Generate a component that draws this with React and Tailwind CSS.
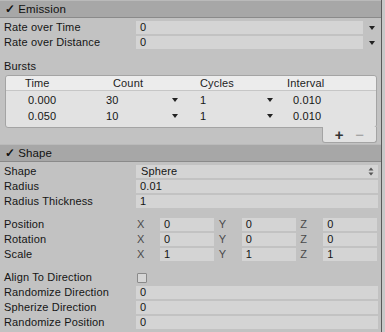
import React from "react";

const Arrow = () => (
  <svg width="6" height="4" viewBox="0 0 6 4" className="shrink-0">
    <path d="M0 0 L6 0 L3 4 Z" fill="#222" />
  </svg>
);

const UpDown = () => (
  <svg width="6" height="9" viewBox="0 0 6 9" className="shrink-0">
    <path d="M0.5 3.5 L5.5 3.5 L3 0.5 Z" fill="#555" />
    <path d="M0.5 5.5 L5.5 5.5 L3 8.5 Z" fill="#555" />
  </svg>
);

const Header = ({ title }) => (
  <div className="h-[18px] bg-[#a7a7a7] border-t border-[#bababa] border-b border-b-[#8a8a8a] flex items-center pl-[5px] gap-[3px] text-[#111]">
    <span className="text-[12px] leading-none font-bold">✓</span>
    <span className="text-[11.5px] leading-none pt-[1px]">{title}</span>
  </div>
);

const Row = ({ label, children }) => (
  <div className="h-[15px] flex items-center">
    <div className="w-[136px] pl-[4px] shrink-0 whitespace-nowrap">{label}</div>
    {children}
  </div>
);

const Field = ({ value, className = "" }) => (
  <div className={`h-[13px] bg-[#d4d4d4] flex items-center pl-[4px] ${className}`}>{value}</div>
);

const CurveRow = ({ label, value }) => (
  <Row label={label}>
    <Field value={value} className="w-[227px]" />
    <div className="w-[17px] flex justify-center">
      <Arrow />
    </div>
  </Row>
);

const VecRow = ({ label, x, y, z }) => (
  <Row label={label}>
    {[
      ["X", x],
      ["Y", y],
      ["Z", z],
    ].map(([k, v]) => (
      <div key={k} className="flex items-center w-[82px]">
        <span className="w-[24px] pl-[1px] text-[#4a4a4a]">{k}</span>
        <Field value={v} className="w-[54px]" />
      </div>
    ))}
  </Row>
);

const bursts = [
  ["0.000", "30", "1", "0.010"],
  ["0.050", "10", "1", "0.010"],
];

export default function App() {
  return (
    <div
      className="w-[385px] h-[332px] overflow-hidden bg-[#c2c2c2] flex text-[11px] tracking-[0.15px] text-[#151515]"
      style={{ fontFamily: '"Liberation Sans", Arial, sans-serif' }}
    >
      <div className="w-[382px] border-r border-[#5a5a5a] shrink-0 flex flex-col">
        {/* EMISSION */}
        <Header title="Emission" />
        <div className="flex flex-col pt-[2px]">
          <CurveRow label="Rate over Time" value="0" />
          <CurveRow label="Rate over Distance" value="0" />
        </div>

        <div className="pl-[4px] mt-[9px] h-[15px] flex items-center">Bursts</div>

        <div className="ml-[5px] mr-[4px] mt-[1px] bg-[#e2e2e2] border border-[#a4a4a4] rounded-[3px] pb-[3px]">
          <div className="h-[15px] bg-[#ececec] rounded-t-[3px] border-b border-[#c6c6c6] flex items-center text-[#222]">
            <span className="w-[94px] pl-[19px]">Time</span>
            <span className="w-[93px] pl-[13px]">Count</span>
            <span className="w-[92px] pl-[7px]">Cycles</span>
            <span className="pl-[2px]">Interval</span>
          </div>
          <div className="pt-[1px]">
            {bursts.map((b, i) => (
              <div key={i} className="h-[16px] flex items-center">
                <span className="w-[94px] pl-[22px]">{b[0]}</span>
                <span className="w-[93px] pl-[6px] flex items-center justify-between pr-[15px]">
                  {b[1]}
                  <Arrow />
                </span>
                <span className="w-[92px] pl-[7px] flex items-center justify-between pr-[12px]">
                  {b[2]}
                  <Arrow />
                </span>
                <span className="pl-[8px]">{b[3]}</span>
              </div>
            ))}
          </div>
        </div>
        <div className="self-end mr-[4px] -mt-[1px] w-[55px] h-[16px] bg-[#e2e2e2] border border-t-0 border-[#a4a4a4] rounded-b-[3px] flex items-center justify-around px-[6px]">
          <span className="text-[15px] font-bold leading-none text-[#333]">+</span>
          <span className="text-[15px] leading-none text-[#999]">−</span>
        </div>

        {/* SHAPE */}
        <div className="mt-[1px]">
          <Header title="Shape" />
        </div>
        <div className="flex flex-col pt-[2px]">
          <Row label="Shape">
            <div className="h-[13px] w-[242px] bg-[#d4d4d4] flex items-center justify-between pl-[5px] pr-[4px]">
              <span>Sphere</span>
              <UpDown />
            </div>
          </Row>
          <Row label="Radius">
            <Field value="0.01" className="w-[242px]" />
          </Row>
          <Row label="Radius Thickness">
            <Field value="1" className="w-[242px]" />
          </Row>
        </div>

        <div className="flex flex-col mt-[8px]">
          <VecRow label="Position" x="0" y="0" z="0" />
          <VecRow label="Rotation" x="0" y="0" z="0" />
          <VecRow label="Scale" x="1" y="1" z="1" />
        </div>

        <div className="flex flex-col mt-[8px]">
          <Row label="Align To Direction">
            <div className="ml-[1px] w-[10px] h-[10px] border border-[#8a8a8a] bg-[#d6d6d6] rounded-[1px]" />
          </Row>
          <Row label="Randomize Direction">
            <Field value="0" className="w-[242px]" />
          </Row>
          <Row label="Spherize Direction">
            <Field value="0" className="w-[242px]" />
          </Row>
          <Row label="Randomize Position">
            <Field value="0" className="w-[242px]" />
          </Row>
        </div>
      </div>
      <div className="flex-1 bg-[#c8c8c8]" />
    </div>
  );
}
